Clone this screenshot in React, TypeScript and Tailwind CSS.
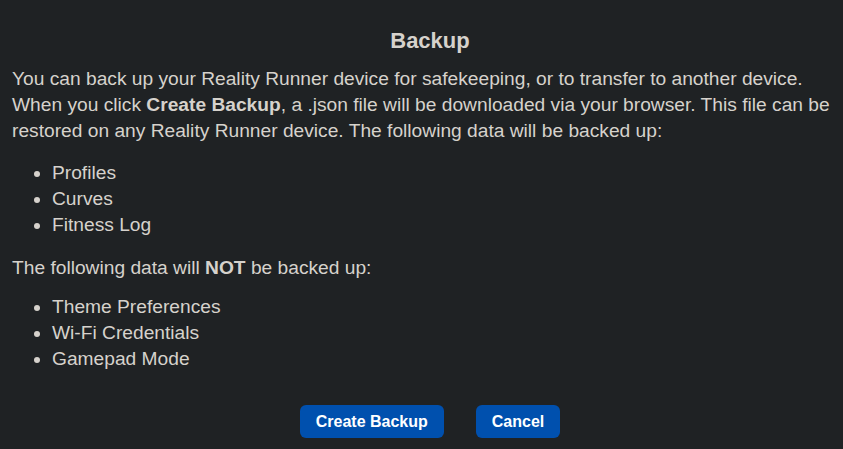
export default function App() {
  return (
    <div
      className="min-h-[449px] w-full bg-[#1f2224] pl-3 pr-1 pt-[26px] text-[19.2px] leading-[26px] text-[#d6d2cc]"
      style={{ fontFamily: '"Liberation Sans", Arial, sans-serif' }}
    >
      <h2 className="pl-[9px] text-center text-[22px] font-bold leading-[30px]">Backup</h2>
      <p className="mt-[10px]">
        You can back up your Reality Runner device for safekeeping, or to transfer to another device. When you
        click <b>Create Backup</b>, a .json file will be downloaded via your browser. This file can be restored on any
        Reality Runner device. The following data will be backed up:
      </p>
      <ul className="mt-[16px] list-disc pl-10">
        <li>Profiles</li>
        <li>Curves</li>
        <li>Fitness Log</li>
      </ul>
      <p className="mt-[17px]">
        The following data will <b>NOT</b> be backed up:
      </p>
      <ul className="mt-[13px] list-disc pl-10">
        <li>Theme Preferences</li>
        <li>Wi-Fi Credentials</li>
        <li>Gamepad Mode</li>
      </ul>
      <div className="mt-[33px] flex justify-center gap-8 pl-[9px]">
        <button className="h-[33px] rounded-md bg-[#0050ae] px-4 text-[16px] font-bold text-white">
          Create Backup
        </button>
        <button className="h-[33px] rounded-md bg-[#0050ae] px-4 text-[16px] font-bold text-white">Cancel</button>
      </div>
    </div>
  );
}
